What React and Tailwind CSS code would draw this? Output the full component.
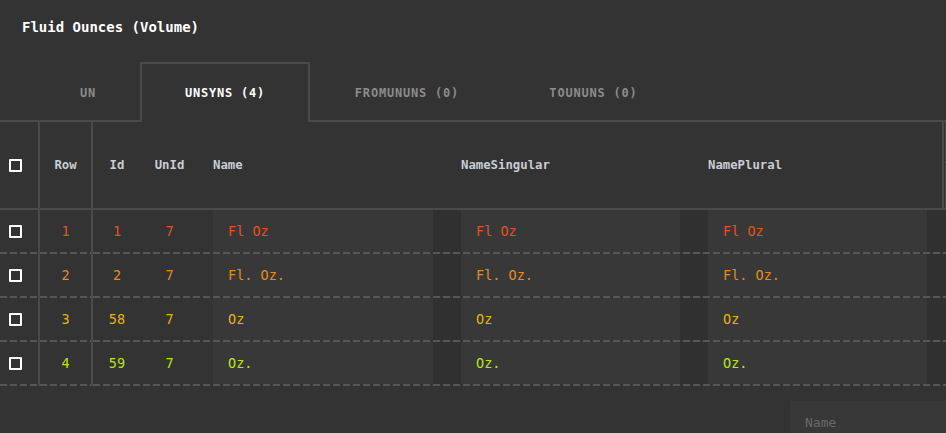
import React from "react";

const rows = [
  { row: 1, id: 1, unId: 7, name: "Fl Oz", color: "text-[#e3511f]" },
  { row: 2, id: 2, unId: 7, name: "Fl. Oz.", color: "text-[#e58a1b]" },
  { row: 3, id: 58, unId: 7, name: "Oz", color: "text-[#e7b111]" },
  { row: 4, id: 59, unId: 7, name: "Oz.", color: "text-[#b6e51d]" },
];

const tabs = [
  { label: "UN", width: "w-[104px]" },
  { label: "UNSYNS (4)", width: "w-[170px]", active: true },
  { label: "FROMUNUNS (0)", width: "w-[194px]" },
  { label: "TOUNUNS (0)", width: "w-[179px]" },
];

const dash =
  "h-[2px] bg-[repeating-linear-gradient(to_right,#565656_0_7px,transparent_7px_10px)]";

function Checkbox() {
  return <span className="block h-[13px] w-[13px] rounded-[1px] border-2 border-white" />;
}

function DashRule() {
  return (
    <div className="flex h-[2px]">
      <div className={`w-[38px] ${dash}`} />
      <div className="h-[2px] w-[2px] bg-[#4a4a4a]" />
      <div className={`w-[51px] ${dash}`} />
      <div className="h-[2px] w-[2px] bg-[#4a4a4a]" />
      <div className={`flex-1 ${dash}`} />
    </div>
  );
}

function TextCell({ value, pad, width, color }) {
  return (
    <div className={`flex h-[42px] ${width} shrink-0 bg-[#303030]`}>
      <div className={`flex h-full ${pad} items-center bg-[#383838] pl-[15px] text-[13.5px] ${color}`}>
        {value}
      </div>
    </div>
  );
}

export default function App() {
  return (
    <div className="h-[433px] w-[946px] overflow-hidden bg-[#333333] font-['DejaVu_Sans_Mono',monospace]">
      {/* title */}
      <div className="pl-[22px] pt-[18px] text-[14px] font-bold leading-[18px] text-white">
        Fluid Ounces (Volume)
      </div>

      {/* tab strip */}
      <div className="mt-[26px] flex h-[60px] items-stretch">
        <div className="w-[36px] border-b-2 border-[#4a4a4a]" />
        {tabs.map((t) =>
          t.active ? (
            <div
              key={t.label}
              className={`${t.width} flex items-center justify-center border-x-2 border-t-2 border-[#4a4a4a] text-[12px] font-bold tracking-[0.8px] text-white`}
            >
              {t.label}
            </div>
          ) : (
            <div
              key={t.label}
              className={`${t.width} flex items-center justify-center border-b-2 border-[#4a4a4a] pt-[4px] text-[12px] font-bold tracking-[0.8px] text-[#8c8c8c]`}
            >
              {t.label}
            </div>
          )
        )}
        <div className="flex-1 border-b-2 border-[#4a4a4a]" />
      </div>

      {/* grid header */}
      <div className="flex h-[88px] border-b-2 border-[#4a4a4a] text-[12.3px] font-bold text-[#c9cdd5]">
        <div className="flex w-[40px] items-center border-r-2 border-[#4a4a4a] pl-[9px]">
          <Checkbox />
        </div>
        <div className="flex w-[53px] items-center justify-center border-r-2 border-[#4a4a4a]">Row</div>
        <div className="flex w-[48px] items-center justify-center">Id</div>
        <div className="flex w-[72px] items-center justify-center pr-[15px]">UnId</div>
        <div className="flex w-[248px] items-center">Name</div>
        <div className="flex w-[247px] items-center pl-[-1px]">NameSingular</div>
        <div className="flex w-[236px] items-center border-r-2 border-[#4a4a4a]">NamePlural</div>
        <div className="flex w-[2px] flex-col justify-between">
          <div className="ml-[1px] h-[42px] w-[1px] bg-[#4a4a4a]" />
          <div className="ml-[1px] h-[43px] w-[1px] bg-[#4a4a4a]" />
        </div>
      </div>

      {/* grid body */}
      {rows.map((r) => (
        <div key={r.row}>
          <div className={`flex h-[42px] text-[13.5px] ${r.color}`}>
            <div className="flex w-[40px] items-center border-r-2 border-[#4a4a4a] pl-[9px]">
              <Checkbox />
            </div>
            <div className="flex w-[53px] items-center justify-center border-r-2 border-[#4a4a4a]">{r.row}</div>
            <div className="flex w-[48px] items-center justify-center">{r.id}</div>
            <div className="flex w-[72px] items-center justify-center pr-[15px]">{r.unId}</div>
            <TextCell value={r.name} width="w-[248px]" pad="w-[220px]" color={r.color} />
            <TextCell value={r.name} width="w-[247px]" pad="w-[219px]" color={r.color} />
            <TextCell value={r.name} width="w-[238px]" pad="w-[219px]" color={r.color} />
          </div>
          <DashRule />
        </div>
      ))}

      {/* filter box */}
      <div className="mt-[15px] flex justify-end">
        <input
          placeholder="Name"
          className="h-[42px] w-[156px] bg-[#383838] pl-[15px] font-['DejaVu_Sans_Mono',monospace] text-[13px] text-white outline-none placeholder:text-[#6a6a6a]"
        />
      </div>
    </div>
  );
}
